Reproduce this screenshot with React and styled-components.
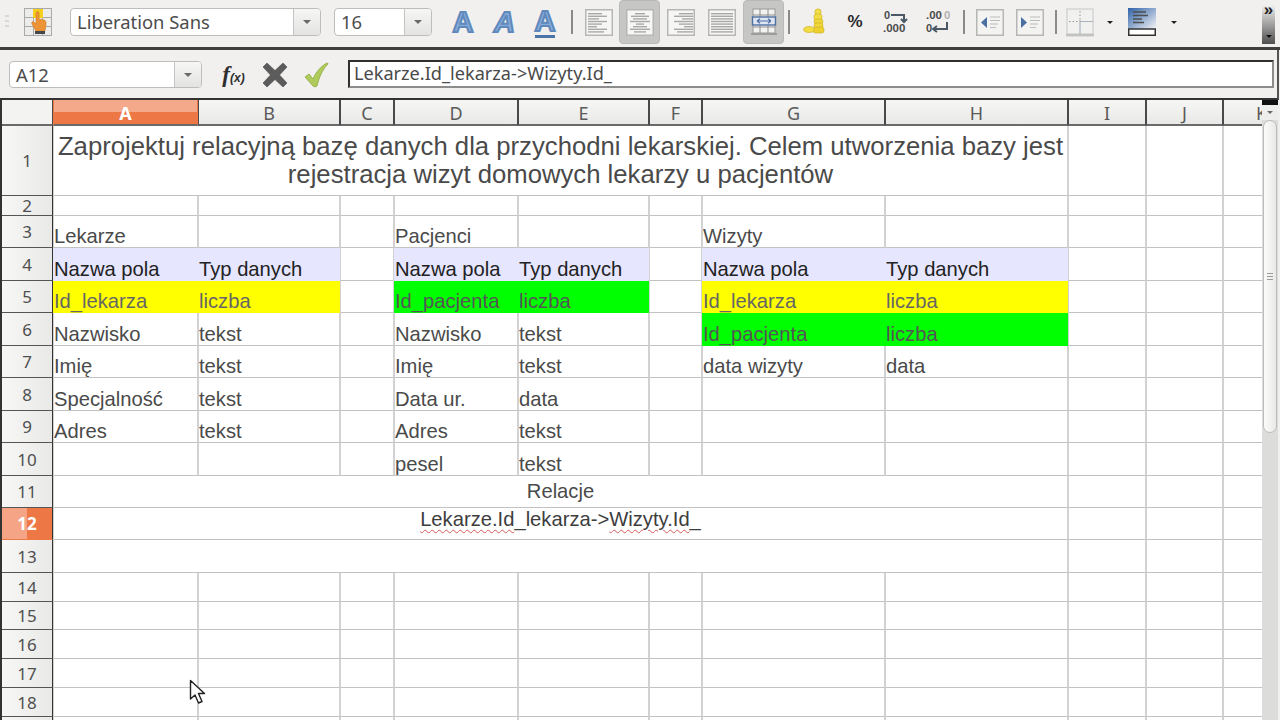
import React from "react";
import styled, { createGlobalStyle } from "styled-components";

const Global = createGlobalStyle`
  html, body { margin: 0; padding: 0; background: #f1f0ef; overflow: hidden; }
  #root { width: 1280px; height: 720px; }
`;

const Page = styled.div`
  position: relative;
  width: 1280px;
  height: 720px;
  overflow: hidden;
  display: flex;
  flex-direction: column;
  font-family: "Noto Sans", "Open Sans", sans-serif;
  background: #f1f0ef;
`;

/* ---------- formatting toolbar ---------- */
const Toolbar = styled.div`
  height: 50px;
  box-sizing: border-box;
  flex: none;
  display: flex;
  align-items: flex-start;
  padding-left: 5px;
  background: #f1f0ef;
  border-bottom: 3px solid #3f3f3f;
`;
const Grip = styled.div`
  width: 4px;
  height: 14px;
  margin-top: 15px;
  margin-right: 15px;
  background: repeating-linear-gradient(#d8d8d6 0 2px, transparent 2px 5px);
`;
const Slot = styled.div`
  flex: none;
  box-sizing: border-box;
  width: ${(p) => p.$w || 41}px;
  height: 44px;
  margin-left: ${(p) => p.$ml || 0}px;
  display: flex;
  align-items: center;
  justify-content: center;
  border-radius: 4px;
  background: ${(p) => (p.$active ? "#c6c6c4" : "transparent")};
  border: ${(p) => (p.$active ? "1px solid #b9b9b7" : "none")};
`;
const Sep = styled.div`
  flex: none;
  width: 2px;
  height: 24px;
  margin: 10px ${(p) => p.$mr || 4}px 0 ${(p) => p.$ml || 0}px;
  background: #8a8a8a;
`;
const Combo = styled.div`
  flex: none;
  box-sizing: border-box;
  width: ${(p) => p.$w}px;
  height: ${(p) => p.$h || 28}px;
  margin: ${(p) => p.$mt || 8}px 0 0 ${(p) => p.$ml || 0}px;
  display: flex;
  background: #fff;
  border: 1px solid #bdbdbb;
  border-radius: 4px;
  color: #4c4c4c;
  font-size: 18.4px;
`;
const ComboText = styled.div`
  flex: 1;
  padding-left: 6px;
  line-height: 26px;
  white-space: nowrap;
`;
const ComboArrow = styled.div`
  flex: none;
  width: 26px;
  display: flex;
  align-items: center;
  justify-content: center;
  background: linear-gradient(#f6f6f5, #e3e3e1);
  border-left: 1px solid #c4c4c2;
  border-radius: 0 3px 3px 0;
`;
const Tri = styled.div`
  width: 0;
  height: 0;
  border-left: ${(p) => p.$s || 4}px solid transparent;
  border-right: ${(p) => p.$s || 4}px solid transparent;
  border-top: ${(p) => p.$s || 4}px solid ${(p) => p.$c || "#6a6a6a"};
`;
const StyleA = styled.span`
  font-family: "Liberation Sans", sans-serif;
  font-weight: 700;
  font-size: 29px;
  line-height: 28px;
  font-style: ${(p) => (p.$italic ? "italic" : "normal")};
  color: #86abd9;
  -webkit-text-stroke: 2px #5f88bb;
  border-bottom: ${(p) => (p.$under ? "3px solid #4d74a8" : "none")};
`;
const Percent = styled.span`
  font-family: "Liberation Sans", sans-serif;
  font-weight: 700;
  font-size: 17px;
  color: #2c2c2c;
`;
const Overflow = styled.div`
  flex: none;
  box-sizing: border-box;
  width: 13px;
  height: 41px;
  margin: 3px 5px 0 auto;
  display: flex;
  flex-direction: column;
  align-items: center;
  justify-content: space-between;
  padding-bottom: 6px;
  background: linear-gradient(#f0f0ef 5%, #4f4f4f);
  color: #222;
  font: 700 17px/13px "Liberation Sans", sans-serif;
`;

/* ---------- formula bar ---------- */
const FormulaBar = styled.div`
  height: 50px;
  box-sizing: border-box;
  flex: none;
  display: flex;
  align-items: flex-start;
  padding-left: 9px;
  background: #f1f0ef;
  border-bottom: 2px solid #333;
  border-right: 2px solid #555;
  margin-right: 1px;
`;
const FxSlot = styled.div`
  flex: none;
  width: ${(p) => p.$w}px;
  height: 28px;
  margin: 11px 0 0 ${(p) => p.$ml}px;
  display: flex;
  align-items: center;
  justify-content: center;
`;
const FxText = styled.span`
  font-family: "Liberation Serif", serif;
  font-style: italic;
  font-weight: 700;
  font-size: 23px;
  color: #2e2e2e;
  small { font-size: 12px; font-family: "Liberation Sans", sans-serif; }
`;
const FormulaInput = styled.div`
  flex: none;
  box-sizing: border-box;
  width: 926px;
  height: 28px;
  margin: 10px 0 0 19px;
  padding-left: 4px;
  background: #fff;
  border-top: 2px solid #2f2f2f;
  border-left: 2px solid #2f2f2f;
  border-bottom: 2px solid #8c8c8c;
  border-right: 2px solid #8c8c8c;
  color: #4a4a4a;
  font-size: 18.15px;
  line-height: 23px;
  white-space: nowrap;
`;

/* ---------- sheet ---------- */
const Sheet = styled.div`
  flex: 1;
  min-height: 0;
  display: flex;
  border-left: 2px solid #333;
  padding-right: 2px;
`;
const Grid = styled.div`
  flex: none;
  width: 1260px;
  overflow: hidden;
  display: grid;
  grid-template-columns: 51px 145px 142px 54px 124px 131px 53px 183px 183px 78px 77px 77px;
  grid-template-rows: 26px 70px 20px 32px 33px 32px 33px 32px 33px 32px 33px 32px 32px 33px 29px 28px 29px 29px 29px 29px;
  background: #fff;
  font-family: "Liberation Sans", sans-serif;
`;
const ColHead = styled.div`
  box-sizing: border-box;
  display: flex;
  align-items: center;
  justify-content: center;
  overflow: hidden;
  font-family: "Noto Sans", sans-serif;
  font-size: 18px;
  padding-top: 2px;
  font-weight: ${(p) => (p.$sel ? 700 : 400)};
  color: ${(p) => (p.$sel ? "#fff" : "#5a5a5a")};
  background: ${(p) =>
    p.$sel
      ? "linear-gradient(#f4a98a 0 50%, #ee7845 50% 100%)"
      : "linear-gradient(#f6f6f5, #e9e9e8)"};
  border-left: 1px solid ${(p) => (p.$sel ? "#ee7845" : "#4a4a4a")};
  border-right: 1px solid ${(p) => (p.$sel ? "#ee7845" : "#4a4a4a")};
  border-bottom: 2px solid #6a6a6a;
`;
const Corner = styled(ColHead)`
  background: #f3f3f2;
  border-left: 0;
`;
const RowHead = styled.div`
  box-sizing: border-box;
  display: flex;
  align-items: center;
  justify-content: center;
  font-family: "Noto Sans", sans-serif;
  font-size: 17px;
  font-weight: ${(p) => (p.$sel ? 700 : 400)};
  color: ${(p) => (p.$sel ? "#fff" : "#4f4f4f")};
  background: ${(p) =>
    p.$sel
      ? "linear-gradient(90deg, #f5a585 0 50%, #ee7845 50% 100%)"
      : "linear-gradient(90deg, #f7f7f6, #e9e9e8)"};
  border-right: 1px solid #333;
  border-bottom: ${(p) => (p.$sel ? "1px solid #ee7845" : "1px solid #555")};
`;
const Cell = styled.div`
  box-sizing: border-box;
  min-width: 0;
  display: flex;
  align-items: flex-end;
  white-space: nowrap;
  font-size: 20.2px;
  line-height: 21px;
  color: ${(p) => p.$color || "#4a4a4a"};
  background: ${(p) => p.$fill || "#fff"};
  border-left: 1px solid ${(p) => p.$fill || "#d2d2d2"};
  border-right: 1px solid ${(p) => p.$fill || "#d2d2d2"};
  border-bottom: 1px solid ${(p) => p.$fill || "#c2c2c2"};
  grid-column: span ${(p) => p.$span || 1};
`;
const Centered = styled(Cell)`
  justify-content: center;
  align-items: center;
  text-align: center;
  white-space: normal;
  line-height: 23px;
`;
const Title = styled(Centered)`
  font-size: 25.7px;
  line-height: 28px;
  color: #4a4a4a;
  padding-bottom: 2px;
`;
const Misspelt = styled.span`
  text-decoration: underline wavy #d8595c 1px;
  text-underline-offset: 3px;
`;
const Entry = styled.span`
  color: #3d3d3d;
  position: relative;
  top: -4px;
`;

const Scrollbar = styled.div`
  flex: none;
  width: 16px;
  display: flex;
  flex-direction: column;
  align-items: center;
  background: #dcdcda;
`;
const ScrollCap = styled.div`
  align-self: stretch;
  height: 5px;
  background: #111;
`;
const ScrollUp = styled.div`
  height: 15px;
  display: flex;
  align-items: center;
  align-self: stretch;
  justify-content: center;
  background: #eeeeed;
`;
const Thumb = styled.div`
  box-sizing: border-box;
  width: 14px;
  height: 313px;
  display: flex;
  flex-direction: column;
  align-items: center;
  justify-content: center;
  gap: 2px;
  background: linear-gradient(90deg, #fbfbfa, #e9e9e7);
  border: 1px solid #bcbcba;
  border-radius: 7px;
`;
const ThumbGrip = styled.div`
  width: 6px;
  height: 1px;
  background: #9a9a98;
`;
const Pointer = styled.svg`
  position: absolute;
  left: 189px;
  top: 679px;
`;

/* ---------- icons ---------- */
const HandIcon = () => (
  <svg width="28" height="28" viewBox="0 0 28 28">
    <rect x="0.5" y="0.5" width="27" height="27" fill="#ececea" stroke="#a9a9a7" />
    <path d="M0 9.5H28M0 18.5H28M9.5 0V28M18.5 0V28" stroke="#a9a9a7" />
    <rect x="9" y="1" width="10" height="9" fill="#f5cf1e" />
    <path d="M12 5c0-2 3-2 3 0v6l5 1c2 .5 2 2 2 4l-1 7H12l-4-7c-1-2 1-3 2-2l2 2z" fill="#ec9336" stroke="#d27a24" strokeWidth=".6" />
    <rect x="11" y="23" width="10" height="3" fill="#44484c" />
  </svg>
);

const lineSets = {
  left: [[2, 14], [2, 19], [2, 11], [2, 19], [2, 14], [2, 9], [2, 19], [2, 16]],
  center: [[9, 10], [5, 18], [7, 14], [4, 20], [10, 8], [7, 14], [4, 20], [8, 12]],
  right: [[12, 14], [7, 19], [15, 11], [7, 19], [12, 14], [17, 9], [7, 19], [10, 16]],
  full: [[3, 22], [3, 22], [3, 22], [3, 22], [3, 22], [3, 22], [3, 22], [3, 22]],
};
const AlignIcon = ({ kind }) => (
  <svg width="28" height="27" viewBox="0 0 28 27">
    <rect x="0.75" y="0.75" width="26.5" height="25.5" fill="#f6f6f5" stroke="#b6b6b4" strokeWidth="1.5" />
    {lineSets[kind].map(([x, w], i) => (
      <rect key={i} x={x + (kind === "left" ? 1 : 0)} y={4 + i * 2.6} width={w} height="1.4" fill="#a8a8a6" />
    ))}
  </svg>
);
const WrapIcon = () => (
  <svg width="26" height="28" viewBox="0 0 26 28">
    <rect x="2" y="1" width="22" height="24" fill="#f2f2f0" stroke="#9a9a98" />
    <path d="M2 7H24M2 19H24M9 1V25M17 1V25" stroke="#8d8d8b" />
    <rect x="1.5" y="9" width="23" height="8" fill="#dfe6f2" stroke="#4f6fa3" strokeWidth="1.4" />
    <path d="M6 13H20M6 13l3-2.2M6 13l3 2.2M20 13l-3-2.2M20 13l-3 2.2" stroke="#4f6fa3" strokeWidth="1.2" fill="none" />
    <rect x="0" y="25" width="26" height="2" fill="#9d9d9b" />
  </svg>
);
const CoinsIcon = () => (
  <svg width="26" height="34" viewBox="0 0 26 34">
    <rect x="13" y="4" width="6" height="6" rx="2.5" fill="#f2de4a" stroke="#d0b324" strokeWidth=".7" />
    <rect x="12" y="9" width="8" height="6" rx="2.5" fill="#f2de4a" stroke="#d0b324" strokeWidth=".7" />
    <rect x="12" y="14" width="9" height="5" rx="2.5" fill="#efd63a" stroke="#d0b324" strokeWidth=".7" />
    <rect x="12" y="18" width="9" height="5" rx="2.5" fill="#efd63a" stroke="#d0b324" strokeWidth=".7" />
    <rect x="11" y="22" width="11" height="6" rx="2.5" fill="#edd030" stroke="#d0b324" strokeWidth=".7" />
    <ellipse cx="7" cy="24.5" rx="5.5" ry="3" fill="#f2dc42" stroke="#d0b324" strokeWidth=".7" />
  </svg>
);
const DecIcon = ({ add }) => (
  <svg width="26" height="26" viewBox="0 0 26 26" fontFamily="Liberation Sans, sans-serif" fontWeight="700" fontSize="11" fill="#4b4b4b">
    {add ? (
      <>
        <text x="1" y="10">0</text>
        <text x="0" y="23" fontSize="11.5">.000</text>
        <path d="M8 6H21V12M18 10l3 3 3-3" stroke="#4d5866" strokeWidth="2" fill="none" />
      </>
    ) : (
      <>
        <text x="2" y="10" fontSize="11.5">.00</text>
        <text x="20" y="10" fontSize="11.5" fill="#b0b0b0">0</text>
        <text x="2" y="23">0</text>
        <path d="M23 13V20H10M13 17l-4 3 4 3" stroke="#4d5866" strokeWidth="2" fill="none" />
      </>
    )}
  </svg>
);
const IndentIcon = ({ more }) => (
  <svg width="28" height="27" viewBox="0 0 28 27">
    <rect x="0.75" y="0.75" width="26.5" height="25.5" fill="#f3f3f2" stroke="#b6b6b4" strokeWidth="1.5" />
    <path d={more ? "M5 8l6 5.5-6 5.5z" : "M11 8l-6 5.5 6 5.5z"} fill="#486ea2" />
    <path d="M14 8H24M14 11.5H24M14 15H22M14 18.5H20" stroke="#bcbcba" strokeWidth="1.2" />
  </svg>
);
const BorderIcon = () => (
  <svg width="28" height="29" viewBox="0 0 28 29">
    <rect x="1" y="1" width="26" height="25" fill="#f1f1ef" stroke="#c6c6c4" />
    <path d="M14 12V26M14 13.5H27" stroke="#a9b4bf" strokeWidth="1.2" />
    <path d="M3 13.5H13M14 3V12" stroke="#999" strokeDasharray="1.5 2" fill="none" />
    <rect x="0" y="26" width="28" height="2.4" fill="#c2c2c0" />
  </svg>
);
const BgColorIcon = () => (
  <svg width="28" height="28" viewBox="0 0 28 28">
    <defs>
      <linearGradient id="bg" x1="0" y1="0" x2="1" y2="1">
        <stop offset="0" stopColor="#2f62a8" />
        <stop offset="1" stopColor="#f4f5f6" />
      </linearGradient>
    </defs>
    <rect x="0" y="0" width="28" height="21" fill="url(#bg)" />
    <path d="M5 4H18M5 7.5H20M5 11H14M5 14.5H16" stroke="#4e4e4e" strokeWidth="1.3" />
    <rect x="0.75" y="21" width="26.5" height="6.25" fill="#fff" stroke="#333" strokeWidth="1.5" />
  </svg>
);
const CancelIcon = () => (
  <svg width="26" height="26" viewBox="0 0 26 26">
    <path d="M5 1L13 8.5 21 1 25 5 17.5 13 25 21 21 25 13 17.5 5 25 1 21 8.5 13 1 5z" fill="#5c5c5c" stroke="#484848" strokeWidth=".6" strokeLinejoin="round" />
  </svg>
);
const AcceptIcon = () => (
  <svg width="25" height="26" viewBox="0 0 25 26">
    <path d="M1 15l4-3 4 5C12 10 17 4 23 1c1 0 1 1 1 1-6 6-9 14-11 22-1 1-3 1-4 0z" fill="#afcb5c" stroke="#8ea83f" strokeWidth=".8" strokeLinejoin="round" />
  </svg>
);

/* ---------- data ---------- */
const columns = ["A", "B", "C", "D", "E", "F", "G", "H", "I", "J", "K"];
const LAV = "#e6e6ff";
const YEL = "#ffff00";
const GRN = "#00ff00";
const DARK = "#222";

const table = {
  3: { A: ["Lekarze"], D: ["Pacjenci"], G: ["Wizyty"] },
  4: {
    A: ["Nazwa pola", LAV, DARK], B: ["Typ danych", LAV, DARK],
    D: ["Nazwa pola", LAV, DARK], E: ["Typ danych", LAV, DARK],
    G: ["Nazwa pola", LAV, DARK], H: ["Typ danych", LAV, DARK],
  },
  5: {
    A: ["Id_lekarza", YEL, "#666"], B: ["liczba", YEL, "#666"],
    D: ["Id_pacjenta", GRN, "#555"], E: ["liczba", GRN, "#555"],
    G: ["Id_lekarza", YEL, "#666"], H: ["liczba", YEL, "#666"],
  },
  6: {
    A: ["Nazwisko"], B: ["tekst"], D: ["Nazwisko"], E: ["tekst"],
    G: ["Id_pacjenta", GRN, "#555"], H: ["liczba", GRN, "#555"],
  },
  7: { A: ["Imię"], B: ["tekst"], D: ["Imię"], E: ["tekst"], G: ["data wizyty"], H: ["data"] },
  8: { A: ["Specjalność"], B: ["tekst"], D: ["Data ur."], E: ["data"] },
  9: { A: ["Adres"], B: ["tekst"], D: ["Adres"], E: ["tekst"] },
  10: { D: ["pesel"], E: ["tekst"] },
};

const rowCells = (r) => {
  if (r === 1) {
    return [
      <Title key="t" $span={8}>
        Zaprojektuj relacyjną bazę danych dla przychodni lekarskiej. Celem utworzenia bazy jest
        <br />
        rejestracja wizyt domowych lekarzy u pacjentów
      </Title>,
    ];
  }
  if (r === 11) return [<Centered key="t" $span={8}>Relacje</Centered>];
  if (r === 12) {
    return [
      <Centered key="t" $span={8}>
        <Entry>
          <Misspelt>Lekarze.Id</Misspelt>_lekarza-&gt;<Misspelt>Wizyty.Id</Misspelt>_
        </Entry>
      </Centered>,
    ];
  }
  if (r === 13) return [<Centered key="t" $span={8} />];
  return columns.slice(0, 8).map((c) => {
    const d = table[r] && table[r][c];
    const [text, fill, color] = d || [""];
    return (
      <Cell key={c} $fill={fill} $color={color}>
        {text}
      </Cell>
    );
  });
};

export default function App() {
  const rows = Array.from({ length: 19 }, (_, i) => i + 1);
  return (
    <Page>
      <Global />
      <Toolbar>
        <Grip />
        <Slot $w={28}><HandIcon /></Slot>
        <Combo $w={251} $ml={18}>
          <ComboText>Liberation Sans</ComboText>
          <ComboArrow><Tri /></ComboArrow>
        </Combo>
        <Combo $w={98} $ml={13}>
          <ComboText>16</ComboText>
          <ComboArrow><Tri /></ComboArrow>
        </Combo>
        <Slot $w={26} $ml={18}><StyleA>A</StyleA></Slot>
        <Slot $w={23} $ml={17}><StyleA $italic>A</StyleA></Slot>
        <Slot $w={24} $ml={17}><StyleA $under>A</StyleA></Slot>
        <Sep $ml={14} $mr={5} />
        <Slot><AlignIcon kind="left" /></Slot>
        <Slot $active><AlignIcon kind="center" /></Slot>
        <Slot><AlignIcon kind="right" /></Slot>
        <Slot><AlignIcon kind="full" /></Slot>
        <Slot $active $ml={1}><WrapIcon /></Slot>
        <Sep $ml={4} $mr={4} />
        <Slot><CoinsIcon /></Slot>
        <Slot $w={40}><Percent>%</Percent></Slot>
        <Slot><DecIcon add /></Slot>
        <Slot><DecIcon /></Slot>
        <Sep $ml={6} $mr={4} />
        <Slot><IndentIcon /></Slot>
        <Slot $w={40}><IndentIcon more /></Slot>
        <Sep $ml={5} $mr={3} />
        <Slot $w={40}><BorderIcon /></Slot>
        <Slot $w={20}><Tri $s={3} $c="#222" /></Slot>
        <Slot $w={40} $ml={2}><BgColorIcon /></Slot>
        <Slot $w={24}><Tri $s={3} $c="#222" /></Slot>
        <Overflow>
          <span>»</span>
          <Tri $s={3} $c="#111" />
        </Overflow>
      </Toolbar>

      <FormulaBar>
        <Combo $w={193} $mt={11} $h={27}>
          <ComboText>A12</ComboText>
          <ComboArrow><Tri /></ComboArrow>
        </Combo>
        <FxSlot $w={27} $ml={18}><FxText>f<small>(x)</small></FxText></FxSlot>
        <FxSlot $w={26} $ml={15}><CancelIcon /></FxSlot>
        <FxSlot $w={25} $ml={16}><AcceptIcon /></FxSlot>
        <FormulaInput>Lekarze.Id_lekarza-&gt;Wizyty.Id_</FormulaInput>
      </FormulaBar>

      <Sheet>
        <Grid>
          <Corner />
          {columns.map((c) => (
            <ColHead key={c} $sel={c === "A"}>{c}</ColHead>
          ))}
          {rows.map((r) => (
            <React.Fragment key={r}>
              <RowHead $sel={r === 12}>{r < 19 ? r : ""}</RowHead>
              {rowCells(r)}
              <Cell />
              <Cell />
              <Cell />
            </React.Fragment>
          ))}
        </Grid>
        <Scrollbar>
          <ScrollCap />
          <ScrollUp><Tri $s={3} /></ScrollUp>
          <Thumb>
            <ThumbGrip />
            <ThumbGrip />
            <ThumbGrip />
          </Thumb>
        </Scrollbar>
      </Sheet>

      <Pointer width="18" height="26" viewBox="0 0 18 26">
        <path d="M1.5 1.5V20l4.5-4 3.5 8 3.5-1.5-3.5-8h6z" fill="#fff" stroke="#222" strokeWidth="1.4" strokeLinejoin="round" />
      </Pointer>
    </Page>
  );
}
